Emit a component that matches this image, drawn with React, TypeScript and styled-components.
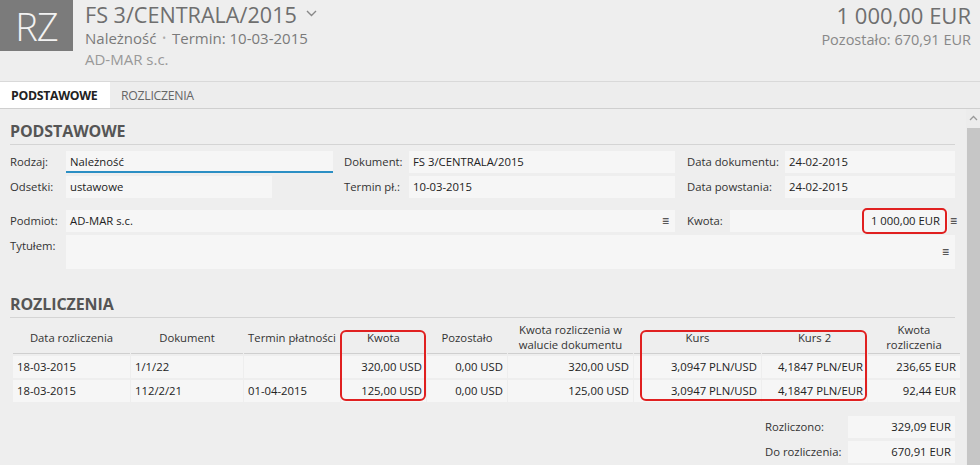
import styled, { createGlobalStyle } from 'styled-components';

const GlobalStyle = createGlobalStyle`
  html, body {
    margin: 0;
    padding: 0;
    background: #eeeeee;
  }
  body {
    font-family: 'Open Sans', 'Noto Sans', 'Liberation Sans', sans-serif;
    color: #333;
  }
  * { box-sizing: border-box; }
`;

type Row = {
  date: string;
  doc: string;
  due: string;
  amount: string;
  left: string;
  docAmount: string;
  rate: string;
  rate2: string;
  settled: string;
};

const rows: Row[] = [
  {
    date: '18-03-2015',
    doc: '1/1/22',
    due: '',
    amount: '320,00 USD',
    left: '0,00 USD',
    docAmount: '320,00 USD',
    rate: '3,0947 PLN/USD',
    rate2: '4,1847 PLN/EUR',
    settled: '236,65 EUR',
  },
  {
    date: '18-03-2015',
    doc: '112/2/21',
    due: '01-04-2015',
    amount: '125,00 USD',
    left: '0,00 USD',
    docAmount: '125,00 USD',
    rate: '3,0947 PLN/USD',
    rate2: '4,1847 PLN/EUR',
    settled: '92,44 EUR',
  },
];

const colWidths = [117, 112, 96, 85, 80, 125, 127, 105, 92];

function Burger() {
  return <Menu>≡</Menu>;
}

export default function App() {
  return (
    <Page>
      <GlobalStyle />
      <Header>
        <Badge>RZ</Badge>
        <HeaderInfo>
          <Title>
            FS 3/CENTRALA/2015
            <svg width="11" height="7" viewBox="0 0 11 7">
              <path d="M1 1l4.5 4.5L10 1" fill="none" stroke="#888" strokeWidth="1.4" />
            </svg>
          </Title>
          <SubLine>
            Należność <Dot>•</Dot> Termin: 10-03-2015
          </SubLine>
          <Company>AD-MAR s.c.</Company>
        </HeaderInfo>
        <HeaderTotals>
          <Total>1 000,00 EUR</Total>
          <Remaining>Pozostało: 670,91 EUR</Remaining>
        </HeaderTotals>
      </Header>

      <Tabs>
        <Tab active>PODSTAWOWE</Tab>
        <Tab>ROZLICZENIA</Tab>
      </Tabs>

      <Body>
        <Content>
          <SectionTitle>PODSTAWOWE</SectionTitle>

          <FormRows>
            <FormRow>
              <Label w={56}>Rodzaj:</Label>
              <Field w={267} focused>Należność</Field>
              <Label w={65} ml={11}>Dokument:</Label>
              <Field w={266}>FS 3/CENTRALA/2015</Field>
              <Label w={98} ml={12}>Data dokumentu:</Label>
              <Field w={170}>24-02-2015</Field>
            </FormRow>
            <FormRow>
              <Label w={56}>Odsetki:</Label>
              <Field w={206}>ustawowe</Field>
              <Label w={65} ml={72}>Termin pł.:</Label>
              <Field w={266}>10-03-2015</Field>
              <Label w={98} ml={12}>Data powstania:</Label>
              <Field w={170}>24-02-2015</Field>
            </FormRow>
          </FormRows>

          <FormRows top={12}>
            <FormRow>
              <Label w={56}>Podmiot:</Label>
              <Field w={609}>
                <span>AD-MAR s.c.</span>
                <Burger />
              </Field>
              <Label w={43} ml={12}>Kwota:</Label>
              <Field w={218} align="right">
                <Highlight>1 000,00 EUR</Highlight>
              </Field>
              <Burger />
            </FormRow>
            <FormRow>
              <Label w={56}>Tytułem:</Label>
              <Field w={889} h={34} align="right" center>
                <Burger />
              </Field>
            </FormRow>
          </FormRows>

          <SectionTitle top={23}>ROZLICZENIA</SectionTitle>

          <TableWrap>
            <Grid>
              <colgroup>
                {colWidths.map((w, i) => (
                  <col key={i} style={{ width: w }} />
                ))}
              </colgroup>
              <thead>
                <tr>
                  <Th>Data rozliczenia</Th>
                  <Th>Dokument</Th>
                  <Th>Termin płatności</Th>
                  <Th>Kwota</Th>
                  <Th>Pozostało</Th>
                  <Th>
                    Kwota rozliczenia w<br />
                    walucie dokumentu
                  </Th>
                  <Th>Kurs</Th>
                  <Th>Kurs 2</Th>
                  <Th>
                    Kwota
                    <br />
                    rozliczenia
                  </Th>
                </tr>
              </thead>
              <tbody>
                {rows.map((r, i) => (
                  <tr key={i}>
                    <Td>{r.date}</Td>
                    <Td>{r.doc}</Td>
                    <Td>{r.due}</Td>
                    <Td num>{r.amount}</Td>
                    <Td num>{r.left}</Td>
                    <Td num>{r.docAmount}</Td>
                    <Td num>{r.rate}</Td>
                    <Td num>{r.rate2}</Td>
                    <Td num>{r.settled}</Td>
                  </tr>
                ))}
              </tbody>
            </Grid>
            <RedFrame style={{ left: 328, width: 86 }} />
            <RedFrame style={{ left: 628, width: 227 }} />
          </TableWrap>

          <Summary>
            <SumRow>
              <SumLabel>Rozliczono:</SumLabel>
              <SumValue>329,09 EUR</SumValue>
            </SumRow>
            <SumRow>
              <SumLabel>Do rozliczenia:</SumLabel>
              <SumValue>670,91 EUR</SumValue>
            </SumRow>
          </Summary>
        </Content>
        <ScrollBar>
          <ScrollArrow>
            <svg width="9" height="6" viewBox="0 0 9 6">
              <path d="M1 5l3.5-3.5L8 5" fill="none" stroke="#999" strokeWidth="1.3" />
            </svg>
          </ScrollArrow>
          <Thumb />
        </ScrollBar>
      </Body>
    </Page>
  );
}

const Page = styled.div`
  width: 980px;
  height: 465px;
  overflow: hidden;
  display: flex;
  flex-direction: column;
  background: #eeeeee;
`;

const Header = styled.header`
  height: 82px;
  display: flex;
  align-items: flex-start;
  border-bottom: 1px solid #d9d9d9;
  padding-right: 9px;
`;

const Badge = styled.div`
  width: 73px;
  height: 51px;
  background: #7b7b7b;
  color: #f2f2f2;
  font-size: 38px;
  font-weight: 300;
  display: flex;
  align-items: center;
  justify-content: center;
  letter-spacing: -1px;
  line-height: 1;
`;

const HeaderInfo = styled.div`
  flex: 1;
  padding-left: 12px;
  display: flex;
  flex-direction: column;
`;

const Title = styled.div`
  font-size: 21.6px;
  color: #6f6f6f;
  line-height: 30px;
  display: flex;
  align-items: center;
  gap: 9px;
  svg {
    margin-top: -3px;
  }
`;

const SubLine = styled.div`
  font-size: 15px;
  color: #7a7a7a;
  line-height: 21px;
  margin-top: -2px;
`;

const Dot = styled.span`
  color: #aaa;
  font-size: 10px;
  vertical-align: 2px;
  margin: 0 2px;
`;

const Company = styled.div`
  font-size: 15px;
  color: #999;
  line-height: 21px;
`;

const HeaderTotals = styled.div`
  display: flex;
  flex-direction: column;
  align-items: flex-end;
`;

const Total = styled.div`
  font-size: 22px;
  color: #6f6f6f;
  line-height: 30px;
`;

const Remaining = styled.div`
  font-size: 14.5px;
  color: #888;
  line-height: 21px;
  margin-top: -1px;
`;

const Tabs = styled.nav`
  height: 27px;
  display: flex;
  border-bottom: 1px solid #cfcfcf;
  background: #ededed;
`;

const Tab = styled.div<{ active?: boolean }>`
  width: ${({ active }) => (active ? '110px' : 'auto')};
  padding: 0 10px 0 11px;
  display: flex;
  align-items: center;
  font-size: 12.3px;
  font-weight: ${({ active }) => (active ? 700 : 400)};
  color: ${({ active }) => (active ? '#222' : '#666')};
  background: ${({ active }) => (active ? '#ffffff' : 'transparent')};
  letter-spacing: -0.3px;
`;

const Body = styled.main`
  flex: 1;
  display: flex;
  min-height: 0;
`;

const Content = styled.div`
  flex: 1;
  min-width: 0;
  padding: 10px 6px 0 10px;
  display: flex;
  flex-direction: column;
`;

const SectionTitle = styled.h2<{ top?: number }>`
  margin: ${({ top }) => top ?? 0}px 5px 0 0;
  font-size: 16px;
  font-weight: 700;
  color: #555;
  line-height: 24px;
  padding-bottom: 1px;
  border-bottom: 1px solid #d4d4d4;
  height: 26px;
  letter-spacing: -0.1px;
`;

const FormRows = styled.div<{ top?: number }>`
  display: flex;
  flex-direction: column;
  gap: 3px;
  margin-top: ${({ top }) => top ?? 6}px;
`;

const FormRow = styled.div`
  display: flex;
  align-items: flex-start;
  font-size: 11.3px;
`;

const Label = styled.div<{ w: number; ml?: number }>`
  width: ${({ w }) => w}px;
  margin-left: ${({ ml }) => ml ?? 0}px;
  line-height: 22px;
  color: #333;
  flex-shrink: 0;
  white-space: nowrap;
`;

const Field = styled.div<{
  w: number;
  h?: number;
  focused?: boolean;
  align?: string;
  center?: boolean;
}>`
  width: ${({ w }) => w}px;
  height: ${({ h }) => h ?? 22}px;
  background: #f6f6f6;
  padding: 0 4px;
  line-height: 22px;
  color: #222;
  display: flex;
  justify-content: ${({ align }) => (align === 'right' ? 'flex-end' : 'space-between')};
  align-items: ${({ center }) => (center ? 'center' : 'flex-start')};
  flex-shrink: 0;
  border-bottom: ${({ focused }) => (focused ? '2px solid #2b8fc4' : 'none')};
`;

const Menu = styled.span`
  font-size: 12px;
  color: #333;
  line-height: 22px;
  padding: 0 2px;
  height: 22px;
`;

const Highlight = styled.span`
  border: 2px solid #e02020;
  border-radius: 5px;
  padding: 0 5px 0 7px;
  margin: -2px -3px 0 0;
  line-height: 22px;
  height: 26px;
`;

const TableWrap = styled.div`
  position: relative;
  margin-top: 2px;
  margin-left: 2px;
`;

const Grid = styled.table`
  table-layout: fixed;
  border-collapse: separate;
  border-spacing: 1px 2px;
  width: 948px;
  font-size: 11.3px;
  color: #222;
  thead th {
    border-bottom: 1px solid #cfcfcf;
  }
`;

const Th = styled.th`
  font-weight: 400;
  color: #333;
  text-align: center;
  height: 31px;
  line-height: 15px;
  padding: 0 1px 1px;
  vertical-align: middle;
  white-space: nowrap;
`;

const Td = styled.td<{ num?: boolean }>`
  background: #f6f6f6;
  height: 22px;
  line-height: 22px;
  padding: 0 4px;
  text-align: ${({ num }) => (num ? 'right' : 'left')};
  white-space: nowrap;
`;

const RedFrame = styled.div`
  position: absolute;
  top: 10px;
  height: 71px;
  border: 2px solid #e02020;
  border-radius: 6px;
  pointer-events: none;
`;

const Summary = styled.div`
  margin: 12px 5px 0 0;
  display: flex;
  flex-direction: column;
  align-items: flex-end;
  gap: 3px;
  font-size: 11.3px;
`;

const SumRow = styled.div`
  display: flex;
  align-items: center;
`;

const SumLabel = styled.div`
  width: 83px;
  color: #333;
  line-height: 22px;
`;

const SumValue = styled.div`
  width: 107px;
  height: 22px;
  background: #f6f6f6;
  line-height: 22px;
  text-align: right;
  padding-right: 4px;
  color: #222;
`;

const ScrollBar = styled.aside`
  width: 14px;
  display: flex;
  flex-direction: column;
  background: #ececec;
`;

const ScrollArrow = styled.div`
  height: 18px;
  display: flex;
  align-items: center;
  justify-content: center;
`;

const Thumb = styled.div`
  flex: 1;
  margin: 1px 0 0 1px;
  background: #c6c6c6;
`;
